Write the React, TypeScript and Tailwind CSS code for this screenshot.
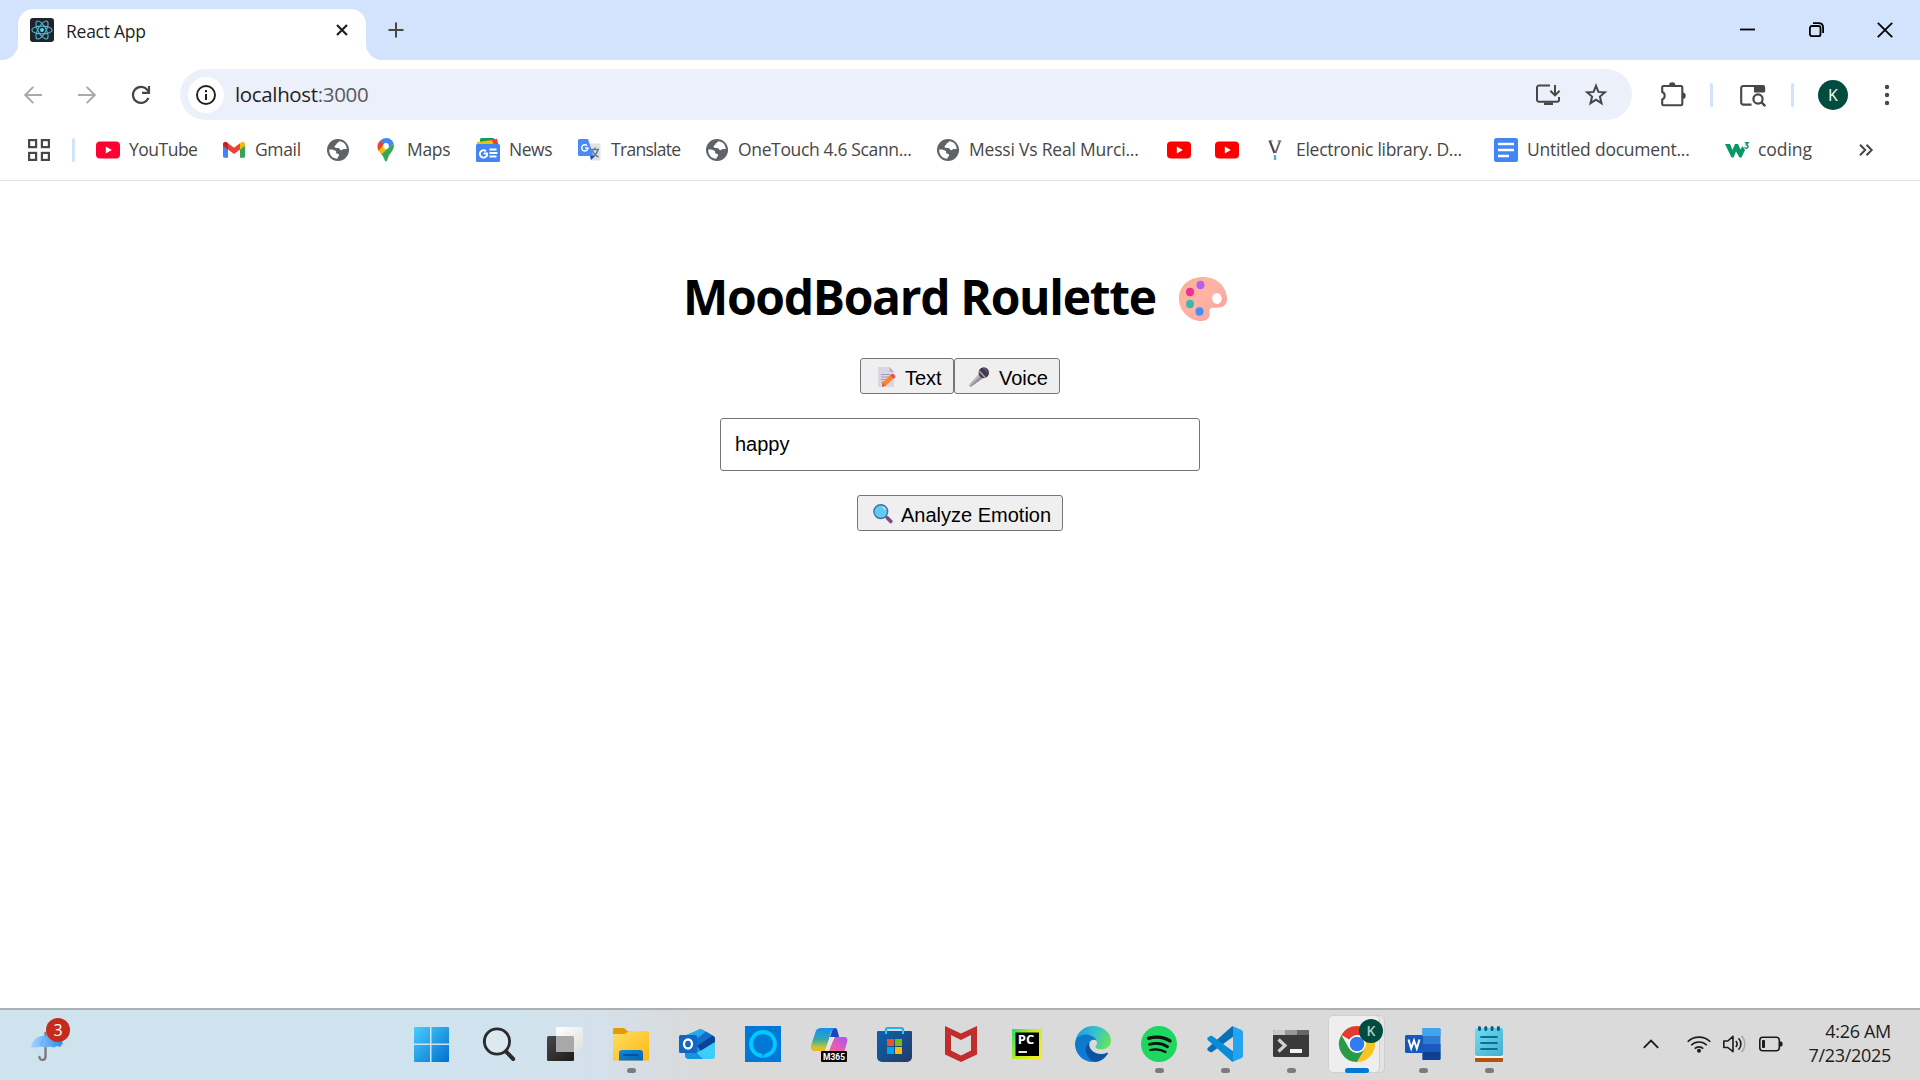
import React from "react";

type IconProps = { children: React.ReactNode; w?: number; h?: number; className?: string };

function Svg({ children, w = 24, h = 24, className = "" }: IconProps) {
  return (
    <svg width={w} height={h} viewBox={`0 0 ${w} ${h}`} fill="none" className={`block shrink-0 overflow-visible ${className}`}>
      {children}
    </svg>
  );
}

/* ---------- Browser: tab strip ---------- */

function ReactFavicon() {
  return (
    <Svg>
      <rect width="24" height="24" rx="3" fill="#20232a" />
      <g stroke="#4fb8d3" strokeWidth="1.1">
        <ellipse cx="12" cy="12" rx="10.2" ry="3.9" />
        <ellipse cx="12" cy="12" rx="10.2" ry="3.9" transform="rotate(60 12 12)" />
        <ellipse cx="12" cy="12" rx="10.2" ry="3.9" transform="rotate(120 12 12)" />
      </g>
      <circle cx="12" cy="12" r="1.9" fill="#61dafb" />
    </Svg>
  );
}

function TabStrip() {
  return (
    <div className="flex h-[60px] bg-white">
      <div className="w-[18px] rounded-br-[16px] bg-[#d3e2fd]" />
      <div className="w-[348px] [background:linear-gradient(#d3e2fd_50%,#fff_50%)]">
        <div className="mt-[9px] flex h-[51px] items-center rounded-t-[15px] bg-white pl-3 pr-[18px]">
          <div className="mb-[9px]">
            <ReactFavicon />
          </div>
          <span className="mb-[7px] ml-[12px] text-[17.5px] tracking-[-0.25px] text-[#1f1f1f]">React App</span>
          <Svg w={12} h={12} className="mb-[9px] ml-auto">
            <path d="M1 1l10 10M11 1L1 11" stroke="#1f1f1f" strokeWidth="2.2" />
          </Svg>
        </div>
      </div>
      <div className="flex flex-1 items-center rounded-bl-[16px] bg-[#d3e2fd] pl-[22px] pr-[27px]">
        <Svg w={16} h={16}>
          <path d="M8 .5v15M.5 8h15" stroke="#474747" strokeWidth="2" />
        </Svg>
        <div className="ml-auto flex items-center">
          <Svg w={15} h={15}>
            <path d="M0 6.5h15" stroke="#000" strokeWidth="1.8" />
          </Svg>
          <Svg w={16} h={16} className="ml-[53px]">
            <rect x="1.9" y="4" width="10.6" height="10.2" rx="2" stroke="#000" strokeWidth="1.8" />
            <path d="M5 1.2h5.5c2.8 0 4.6 1.6 4.6 4.4V11" stroke="#000" strokeWidth="1.8" />
          </Svg>
          <Svg w={16} h={16} className="ml-[53px]">
            <path d="M.8.8l14.4 14.4M15.2.8L.8 15.2" stroke="#000" strokeWidth="1.8" />
          </Svg>
        </div>
      </div>
    </div>
  );
}

/* ---------- Browser: toolbar ---------- */

function Toolbar() {
  return (
    <div className="flex h-[69px] items-center bg-white pl-6">
      <Svg w={18} h={18}>
        <path d="M18 9H1.6M9.3 .9L1.2 9l8.1 8.1" stroke="#a9a9a9" strokeWidth="2" />
      </Svg>
      <Svg w={18} h={18} className="ml-[36px]">
        <path d="M0 9h16.4M8.7 .9L16.8 9l-8.1 8.1" stroke="#a9a9a9" strokeWidth="2" />
      </Svg>
      <Svg w={18} h={18} className="ml-[36px]">
        <path d="M16.4 11.8A8 8 0 1 1 15 3.6L17 6" stroke="#474747" strokeWidth="2.2" />
        <path d="M17 0v6.8h-7" stroke="#474747" strokeWidth="2.2" />
      </Svg>
      <div className="ml-[30px] flex h-[51px] w-[1452px] items-center rounded-full bg-[#ecf0fa] pl-[8px] pr-[24px]">
        <div className="flex size-[36px] items-center justify-center rounded-full bg-white">
          <Svg w={20} h={20}>
            <circle cx="10" cy="10" r="9" stroke="#1f1f1f" strokeWidth="1.9" />
            <path d="M10 9v6M10 5v2.2" stroke="#1f1f1f" strokeWidth="2" />
          </Svg>
        </div>
        <span className="ml-[11px] text-[20.5px] tracking-[-0.35px] text-[#1f1f1f]">
          localhost<span className="text-[#5a5a5a]">:3000</span>
        </span>
        <Svg w={24} h={22} className="ml-auto">
          <path d="M14 1.5H3a2 2 0 0 0-2 2v12.2a2 2 0 0 0 2 2h18a2 2 0 0 0 2-2V13" stroke="#474747" strokeWidth="2" />
          <path d="M8 18.5h9V21H8z" fill="#474747" />
          <path d="M19 1v10M14.4 6.8l4.6 4.6 4.6-4.6" stroke="#474747" strokeWidth="2" />
        </Svg>
        <Svg w={24} h={24} className="ml-6">
          <path
            d="M12 2.8l2.4 6.1 6.5.5-5 4.2 1.6 6.6-5.5-3.6-5.5 3.6 1.6-6.6-5-4.2 6.5-.5z"
            stroke="#474747"
            strokeWidth="2"
          />
        </Svg>
      </div>
      <Svg w={26} h={24} className="ml-[29px]">
        <path
          d="M3.5 3H20a1.3 1.3 0 0 1 1.3 1.3V21a1.3 1.3 0 0 1-1.3 1.3H2.5A1.3 1.3 0 0 1 1.2 21v-4.6a4 4 0 0 0 0-7.4V4.3A1.3 1.3 0 0 1 2.5 3z"
          stroke="#474747"
          strokeWidth="2.1"
        />
        <path d="M8 2.5a3.2 3.2 0 0 1 6.4 0zM21.5 9.6a3.2 3.2 0 0 1 0 6.4z" fill="#474747" />
      </Svg>
      <div className="ml-[23px] h-6 w-[3px] rounded-full bg-[#d3e2fd]" />
      <Svg w={26} h={24} className="ml-[27px]">
        <path d="M11.5 21.6H3.2a2 2 0 0 1-2-2V5a2 2 0 0 1 2-2H22.5a1.6 1.6 0 0 1 1.6 1.6V9" stroke="#474747" strokeWidth="2.1" />
        <path d="M14 2.5h10.5v7H14z" fill="#474747" />
        <circle cx="18" cy="16" r="4.6" stroke="#474747" strokeWidth="2.2" fill="#fff" />
        <path d="M21.3 19.2l4 4" stroke="#474747" strokeWidth="2.4" />
      </Svg>
      <div className="ml-[25px] h-6 w-[3px] rounded-full bg-[#d3e2fd]" />
      <div className="ml-[24px] flex size-[30px] items-center justify-center rounded-full bg-[#004d40] text-[16px] text-white">
        K
      </div>
      <Svg w={6} h={22} className="ml-[36px]">
        <g fill="#474747">
          <circle cx="3" cy="3" r="2.2" />
          <circle cx="3" cy="11" r="2.2" />
          <circle cx="3" cy="19" r="2.2" />
        </g>
      </Svg>
    </div>
  );
}

/* ---------- Browser: bookmarks ---------- */

function YouTube({ color = "#ff0033" }: { color?: string }) {
  return (
    <Svg>
      <rect y="3.5" width="24" height="17" rx="4" fill={color} />
      <path d="M9.8 8.4v7.2l6-3.6z" fill="#fff" />
    </Svg>
  );
}

function Gmail() {
  return (
    <Svg w={22} h={24}>
      <path d="M0 7v11.2c0 .9.6 1.5 1.5 1.5H5V10z" fill="#4285f4" />
      <path d="M17 10v9.7h3.5c.9 0 1.5-.6 1.5-1.5V7z" fill="#34a853" />
      <path d="M17 5.2v6.3l5-3.8V6c0-2-2.2-3-3.8-1.8z" fill="#fbbc04" />
      <path d="M5 11.5V5.2l6 4.5 6-4.5v6.3L11 16z" fill="#ea4335" />
      <path d="M0 6v1.7l5 3.8V5.2L3.8 4.2C2.2 3 0 4 0 6z" fill="#c5221f" />
    </Svg>
  );
}

function Globe() {
  return (
    <Svg w={22} h={24}>
      <circle cx="11" cy="12" r="11" fill="#5f6368" />
      <path
        d="M2.2 11.5c2.6-.2 5.6.2 6.6 1.6 1 1.5-.5 1.7.9 2.3 1.6.5 2.8.9 2.3 2.4-.4 1-1.6 1-1.6 3C5.5 20.8 2 17 2.2 11.5z"
        fill="#fff"
      />
      <path
        d="M12 3.2c-.2 1.8-2.4 1.5-2.5 2.8-.1 1.4-2 1.2-2 2.6 0 1.7 2.6 1.5 3.7 1.5 1.5 0 1.5 2.2 3 2.2 1.3 0 1.3-1.2 2.6-1.2h2.9c0-4.3-3.2-7.9-7.7-7.9z"
        fill="#fff"
      />
    </Svg>
  );
}

function MapsPin() {
  return (
    <Svg w={16} h={24}>
      <path d="M8 0a8 8 0 0 1 7.6 5.5L9 11.5 2.3 2.6A8 8 0 0 1 8 0z" fill="#4285f4" />
      <path d="M2.3 2.6L6.2 6 1 13.5A8 8 0 0 1 2.3 2.6z" fill="#ea4335" />
      <path d="M10.5 10.2L3.3 16.3A20 20 0 0 1 .8 12.5L5.5 7z" fill="#fbbc04" />
      <path d="M15.6 5.5c1.2 5.2-1.8 8-4 11C9.7 19.2 9.5 23.5 8 23.5S6.3 19 3.3 16.3z" fill="#34a853" />
      <circle cx="8" cy="8" r="2.9" fill="#fff" />
    </Svg>
  );
}

function News() {
  return (
    <Svg>
      <path d="M4 5V1.5A1.5 1.5 0 0 1 5.5 0H17.5L19 2v6H4z" fill="#0f9d58" />
      <path d="M12 2.5L21 .8l1.4 6H12z" fill="#ea4335" />
      <path d="M1 4l15-1.8L18.5 9H1z" fill="#fbbc04" />
      <rect y="6" width="24" height="18" rx="1.5" fill="#4285f4" />
      <path d="M10 13.2A3.7 3.7 0 1 0 11.2 15.5H7.7" stroke="#fff" strokeWidth="1.9" />
      <path d="M13.5 11.5h7M13.5 15h8M13.5 18.5h7" stroke="#fff" strokeWidth="1.9" />
    </Svg>
  );
}

function Translate() {
  return (
    <Svg w={23} h={24}>
      <path d="M9 5.5h12a1.5 1.5 0 0 1 1.5 1.5v14a1.5 1.5 0 0 1-1.5 1.5h-8z" fill="#dfe1e4" />
      <path d="M13 11.5h8M17 9.5v2M20 11.5c-.8 3.5-3 6-5.5 7.5M14.5 12.5c1 3 3 5 6 6.5" stroke="#607988" strokeWidth="1.4" />
      <path d="M12 18h5l-4 4z" fill="#174ea6" />
      <path d="M1.5 1H10l5.5 17h-14A1.5 1.5 0 0 1 0 16.5v-14A1.5 1.5 0 0 1 1.5 1z" fill="#4a8af4" />
      <path d="M9 7.7A3.1 3.1 0 1 0 9.9 10H7" stroke="#fff" strokeWidth="1.5" />
    </Svg>
  );
}

function YLibrary() {
  return (
    <Svg w={14} h={24}>
      <path d="M.5 2.8h4M9.5 2.8H13.5" stroke="#8b8b8b" strokeWidth="1.2" />
      <path d="M1.8 3l4.7 12" stroke="#4a4a4a" strokeWidth="2.2" />
      <path d="M12 3L7.5 15" stroke="#666" strokeWidth="1.9" />
      <path d="M7 17v5" stroke="#4db4d3" strokeWidth="2.4" />
    </Svg>
  );
}

function Docs() {
  return (
    <Svg>
      <rect width="24" height="24" rx="2.5" fill="#4285f4" />
      <path d="M4 6h16M4 12h16M4 18h11" stroke="#fff" strokeWidth="2.4" />
    </Svg>
  );
}

function W3() {
  return (
    <Svg>
      <path d="M0 6h5l2.5 6L10 6h3l2.500 5.500L17.500 8l2.500 4-3.500 7.500h-2L11 13.500 8.500 19.500h-2z" fill="#059862" />
      <path d="M19.800 4.800h3.200l-1.600 2c2.300.2 2.100 3.400-.1 3.400-.8 0-1.400-.3-1.700-1" stroke="#059862" strokeWidth="1.500" />
    </Svg>
  );
}

type Bookmark = { icon: React.ReactNode; label?: string; box: string; text?: string };

const bookmarks: Bookmark[] = [
  { icon: <YouTube />, label: "YouTube", box: "w-[127px]", text: "ml-[9px] tracking-[-0.5px]" },
  { icon: <Gmail />, label: "Gmail", box: "w-[104px]", text: "ml-[10px] tracking-[-0.35px]" },
  { icon: <Globe />, box: "w-[51px]" },
  { icon: <MapsPin />, label: "Maps", box: "w-[98px]", text: "ml-[13px] tracking-[-0.3px]" },
  { icon: <News />, label: "News", box: "w-[102px]", text: "ml-[9px] tracking-[-0.45px]" },
  { icon: <Translate />, label: "Translate", box: "w-[128px]", text: "ml-[10px] tracking-[-0.7px]" },
  { icon: <Globe />, label: "OneTouch 4.6 Scann...", box: "w-[231px]", text: "ml-[10px] tracking-[-0.35px]" },
  { icon: <Globe />, label: "Messi Vs Real Murci...", box: "w-[230px]", text: "ml-[10px] tracking-[-0.2px]" },
  { icon: <YouTube color="#ff0000" />, box: "w-[48px]" },
  { icon: <YouTube color="#ff0000" />, box: "w-[53px]" },
  { icon: <YLibrary />, label: "Electronic library. D...", box: "w-[226px]", text: "ml-[14px] tracking-[-0.27px]" },
  { icon: <Docs />, label: "Untitled document...", box: "w-[231px]", text: "ml-[9px] tracking-[-0.22px]" },
  { icon: <W3 />, label: "coding", box: "w-[134px]", text: "ml-[9px] tracking-[-0.05px]" },
];

function BookmarksBar() {
  return (
    <div className="flex h-[52px] items-center border-b border-[#dedede] bg-white pb-[9px] pl-7">
      <Svg w={22} h={22}>
        <g stroke="#474747" strokeWidth="2.2">
          <rect x="1.1" y="1.1" width="7" height="7" />
          <rect x="13.9" y="1.1" width="7" height="7" />
          <rect x="1.1" y="13.9" width="7" height="7" />
          <rect x="13.9" y="13.9" width="7" height="7" />
        </g>
      </Svg>
      <div className="ml-[22px] mr-[21px] h-6 w-[3px] rounded-full bg-[#d3e2fd]" />
      {bookmarks.map((b, i) => (
        <div key={i} className={`flex h-6 shrink-0 items-center ${b.box}`}>
          {b.icon}
          {b.label && (
            <span className={`mb-[2px] whitespace-nowrap text-[17.5px] leading-6 text-[#474747] ${b.text}`}>{b.label}</span>
          )}
        </div>
      ))}
      <Svg w={14} h={12}>
        <path d="M1 .8L6.2 6 1 11.2M7.5.8L12.7 6l-5.2 5.2" stroke="#474747" strokeWidth="2" />
      </Svg>
    </div>
  );
}

/* ---------- Page ---------- */

function Palette() {
  return (
    <Svg w={50} h={46} className="-ml-px mt-[2px]">
      <defs>
        <linearGradient id="pal" x1="0" y1="0" x2="1" y2="1">
          <stop offset="0" stopColor="#f5b596" />
          <stop offset=".5" stopColor="#ffb3a5" />
          <stop offset="1" stopColor="#f99a9a" />
        </linearGradient>
      </defs>
      <path
        d="M25 1C11 1 1 10 1 22.5 1 36 12 45 23.5 45c5 0 8.5-3 8-7.5-.3-2.5-.5-5.5 3-5.7 3-.2 6 .2 8.5-.5 4-1.2 6.5-4.5 6-9.5C48 9.5 38 1 25 1zm14 16a4.8 5.5 0 1 1-.1 11 4.8 5.5 0 0 1 .1-11z"
        fill="url(#pal)"
        fillRule="evenodd"
      />
      <ellipse cx="22.5" cy="9" rx="4" ry="4.2" fill="#b860f0" />
      <ellipse cx="12" cy="16" rx="4" ry="4.2" fill="#f03090" />
      <ellipse cx="12" cy="28" rx="4" ry="4.2" fill="#3fb8ac" />
      <ellipse cx="21.5" cy="35.5" rx="4" ry="4.2" fill="#4390f5" />
    </Svg>
  );
}

function Memo() {
  return (
    <Svg w={19} h={20}>
      <path d="M0 0h11.5L16 4.8V20H0z" fill="#dcd5e4" />
      <path d="M11.5 0L16 4.8h-4.5z" fill="#b9aec6" />
      <path d="M3 7.5h9M3 10h9M3 12.5h6M3 15h4" stroke="#a69cb2" strokeWidth="1" />
      <path d="M4.5 15.5L12 8.5l3.3 3.3-7.5 7-3.8.9z" fill="#ff822d" />
      <path d="M12 8.5l1.5-1.2c1.8-1 4.7 1.6 3.5 3.2l-1.7 1.3z" fill="#f9443e" />
      <path d="M4.5 15.5l3.3 3.3-3.8.9z" fill="#c46a3c" />
    </Svg>
  );
}

function Mic() {
  return (
    <Svg w={20} h={20}>
      <path d="M10.5 6.5l3.8 4.5L2.5 19.5c-1.5.5-2.5-.5-1.8-2z" fill="#96909c" />
      <path d="M10.5 6.5l1.5 2L1 19.2l-.3-1.7z" fill="#bcb6c0" />
      <ellipse cx="14.8" cy="5.7" rx="5.2" ry="5.5" fill="#43374f" />
      <path d="M10.2 4l6.2 6.8" stroke="#a49dac" strokeWidth="1.7" />
      <path d="M14 1.5c2 0 4 2 4 4" stroke="#6b6076" strokeWidth="1.2" />
    </Svg>
  );
}

function Magnifier() {
  return (
    <Svg w={20} h={20}>
      <path d="M12 13l1.5-1.5 2.3 1.3 3.6 3.7c1 1.3-.9 3.6-2.3 2.7l-3.8-3.7z" fill="#7d4a86" />
      <circle cx="7.8" cy="7.6" r="6.9" fill="#5fccf0" stroke="#4a6ba5" strokeWidth="1.4" />
      <path d="M9.5 2.8c1.5.6 2.4 1.6 2.8 3" stroke="#b8ecfb" strokeWidth="1.3" />
    </Svg>
  );
}

const buttonClass =
  "flex h-9 items-center rounded-[3px] border border-[#767676] bg-[#efefef] pt-[2px] font-['Liberation_Sans',sans-serif] text-[20px] leading-[23px] text-black";

function Page() {
  return (
    <main className="flex flex-1 flex-col items-center bg-white pt-[85px] text-black">
      <h1 className="flex h-[64px] items-center pr-[5px] font-bold leading-[64px]">
        <span className="-ml-[4px] mb-[3px] w-[496px] whitespace-nowrap text-[48px] tracking-[-1.33px]">
          MoodBoard Roulette
        </span>
        <Palette />
      </h1>
      <div className="mt-[28px] flex">
        <button className={`${buttonClass} w-[94px] pl-[17px]`}>
          <Memo />
          <span className="ml-2 mt-[3px]">Text</span>
        </button>
        <button className={`${buttonClass} w-[106px] pl-[14px]`}>
          <Mic />
          <span className="ml-[10px] mt-[3px]">Voice</span>
        </button>
      </div>
      <input
        defaultValue="happy"
        className="mt-6 h-[53px] w-[480px] rounded-[3px] border border-[#767676] bg-white px-[14px] font-['Liberation_Sans',sans-serif] text-[20px] outline-none"
      />
      <button className={`${buttonClass} mt-6 w-[206px] pl-[15px]`}>
        <Magnifier />
        <span className="ml-2 mt-[3px] whitespace-nowrap">Analyze Emotion</span>
      </button>
    </main>
  );
}

/* ---------- Taskbar ---------- */

function Start() {
  return (
    <Svg w={36} h={36} className="mr-1">
      <defs>
        <linearGradient id="win" x1="0" y1="0" x2="36" y2="36" gradientUnits="userSpaceOnUse">
          <stop stopColor="#4bd0ff" />
          <stop offset="1" stopColor="#0070d0" />
        </linearGradient>
      </defs>
      <path
        d="M2 1h15v16.5H1V2a1 1 0 0 1 1-1zM18.5 1H35a1 1 0 0 1 1 1v15.5H18.5zM1 19h16v17H2a1 1 0 0 1-1-1zM18.5 19H36v16a1 1 0 0 1-1 1H18.5z"
        fill="url(#win)"
      />
    </Svg>
  );
}

function Search() {
  return (
    <Svg w={36} h={36}>
      <circle cx="16" cy="15.5" r="12.6" stroke="#2b2b2b" strokeWidth="2.9" fill="#dce9f1" />
      <path d="M25 25.5l7.2 7.5" stroke="#2b2b2b" strokeWidth="4" strokeLinecap="round" />
    </Svg>
  );
}

function TaskView() {
  return (
    <Svg w={36} h={36}>
      <defs>
        <linearGradient id="tv1" x1="0" y1="0" x2="1" y2="1">
          <stop stopColor="#484848" />
          <stop offset="1" stopColor="#1c1c1c" />
        </linearGradient>
        <linearGradient id="tv2" x1="0" y1="0" x2="1" y2="1">
          <stop stopColor="#fff" />
          <stop offset="1" stopColor="#dedede" />
        </linearGradient>
      </defs>
      <rect x="0" y="10" width="27" height="25" rx="1.5" fill="url(#tv1)" />
      <rect x="9" y="1" width="27" height="25" rx="1.5" fill="url(#tv2)" />
      <path d="M9 10h16.5a1.5 1.5 0 0 1 1.5 1.5V26H10.5A1.5 1.5 0 0 1 9 24.5z" fill="#a8a8a8" />
    </Svg>
  );
}

function Explorer() {
  return (
    <Svg w={36} h={36}>
      <defs>
        <linearGradient id="fol" x1="0" y1="0" x2="1" y2="1">
          <stop stopColor="#ffdd66" />
          <stop offset="1" stopColor="#fcb90e" />
        </linearGradient>
        <linearGradient id="fol2" x1="0" y1="0" x2="1" y2="1">
          <stop stopColor="#1389dc" />
          <stop offset="1" stopColor="#0563b4" />
        </linearGradient>
      </defs>
      <path d="M0 3.5A1.5 1.5 0 0 1 1.5 2H11l4 3.5H20V12H0z" fill="#e09c04" />
      <path d="M0 8h12l3.5-2.8H35a1 1 0 0 1 1 1V34.5H0z" fill="url(#fol)" />
      <path d="M6 34.5V27a3 3 0 0 1 3-3h18a3 3 0 0 1 3 3v7.5z" fill="url(#fol2)" />
      <path d="M10.5 29h14" stroke="#064a8c" strokeWidth="1.7" strokeLinecap="round" />
    </Svg>
  );
}

function Outlook() {
  return (
    <Svg w={36} h={36}>
      <path d="M6 12L20 3.5q1.5-1 3 0L36 11v7L18 27H6z" fill="#1e8fe0" />
      <path d="M7 9L20 3.5q1.5-1 3 0L27 6 14 14z" fill="#28a8ea" />
      <path d="M27 5.5l6.5 4L18 20v-7z" fill="#1070cc" />
      <path d="M33.5 9.5Q36 11 36 13v3L22 25l-4-5z" fill="#0a4396" />
      <path d="M36 16v13.5a3.5 3.5 0 0 1-3.5 3.5H10a4 4 0 0 1-4-4v-2h12z" fill="#3ccdf8" />
      <path d="M6 27h12l6 6H10a4 4 0 0 1-4-4z" fill="#1595e0" />
      <rect y="9" width="18" height="18" rx="1.5" fill="#1066c2" />
      <ellipse cx="9" cy="18" rx="4" ry="4.5" stroke="#fff" strokeWidth="2.3" />
    </Svg>
  );
}

function Alexa() {
  return (
    <Svg w={36} h={36}>
      <path d="M0 0h36v36H0z" fill="#0078d7" />
      <circle cx="18" cy="18" r="12" stroke="#00caff" strokeWidth="3.8" />
      <path d="M18 32.5l-.6-5 3.2-.4-1.6 1.9z" fill="#0078d7" />
    </Svg>
  );
}

function M365() {
  return (
    <Svg w={36} h={36}>
      <defs>
        <linearGradient id="m1" x1="0" y1="0" x2="0" y2="1">
          <stop stopColor="#1a8cf0" />
          <stop offset=".5" stopColor="#30aab0" />
          <stop offset=".85" stopColor="#c8c828" />
          <stop offset="1" stopColor="#ffb020" />
        </linearGradient>
        <linearGradient id="m2" x1="1" y1="0" x2="0" y2="1">
          <stop stopColor="#a855f0" />
          <stop offset=".5" stopColor="#ea5cae" />
          <stop offset="1" stopColor="#ff7850" />
        </linearGradient>
      </defs>
      <path d="M22 2h2c2 0 2.5 2 4 9h-9z" fill="#1846c0" />
      <path d="M10 2h15c-4 1-5 4-6.5 9L14 25H3.5C0 25-.8 22 .5 18l4-12C5.5 3 7 2 10 2z" fill="url(#m1)" />
      <path d="M24 11h9c3 0 4 2 3 5.5l-3 10c-1 2.5-3 3.5-5 3.5H10c4-1 6-3 7-6z" fill="url(#m2)" />
      <path d="M19 11h4.5L18 25h-4z" fill="#e8e4ea" />
      <rect x="10" y="25" width="26" height="11" rx="1" fill="#080808" />
      <text x="12" y="33.9" fontSize="9.5" fontWeight="700" fill="#fff" className="font-['Roboto',sans-serif]" textLength="22" lengthAdjust="spacingAndGlyphs">
        M365
      </text>
    </Svg>
  );
}

function Store() {
  return (
    <Svg w={36} h={36}>
      <defs>
        <linearGradient id="sto" x1="0" y1="0" x2="1" y2="1">
          <stop stopColor="#0865b2" />
          <stop offset="1" stopColor="#243a66" />
        </linearGradient>
      </defs>
      <path d="M9 7.5V3.5A1.5 1.5 0 0 1 10.5 2h14A1.5 1.5 0 0 1 26 3.5v4" stroke="#1db5ee" strokeWidth="2.2" />
      <path d="M0 6a1 1 0 0 1 1-1h33a1 1 0 0 1 1 1v25a5 5 0 0 1-5 5H5a5 5 0 0 1-5-5z" fill="url(#sto)" />
      <path d="M9 5v3M26 5v3" stroke="#3cc8f6" strokeWidth="2" />
      <path d="M10 13h7v7h-7z" fill="#f25022" />
      <path d="M18 13h7v7h-7z" fill="#7fba00" />
      <path d="M10 21h7v7h-7z" fill="#00a4ef" />
      <path d="M18 21h7v7h-7z" fill="#ffb900" />
    </Svg>
  );
}

function McAfee() {
  return (
    <Svg w={36} h={36}>
      <path d="M2 0l16 7.5L34 0v28.5L18 36 2 28.5zM8 9v15.5l10 5 10-5V9l-10 5z" fill="#c12d2d" fillRule="evenodd" />
    </Svg>
  );
}

function PyCharm() {
  return (
    <Svg w={36} h={36}>
      <defs>
        <linearGradient id="pyc" x1="0" y1="0" x2="1" y2=".6">
          <stop stopColor="#21e06a" />
          <stop offset=".5" stopColor="#b8ea2a" />
          <stop offset="1" stopColor="#f0ee20" />
        </linearGradient>
      </defs>
      <rect x="3" y="3" width="30" height="30" fill="url(#pyc)" />
      <rect x="6.5" y="6.5" width="23.5" height="23.5" fill="#000" />
      <path d="M9.5 26h8.5" stroke="#fff" strokeWidth="1.8" />
      <text x="8.8" y="18" fontSize="12" fontWeight="700" fill="#fff" className="font-['Open_Sans',sans-serif]" textLength="16.5" lengthAdjust="spacingAndGlyphs">
        PC
      </text>
    </Svg>
  );
}

function Edge() {
  return (
    <Svg w={36} h={36}>
      <defs>
        <linearGradient id="ed1" x1="0" y1=".3" x2="1" y2=".6">
          <stop stopColor="#1b9de2" />
          <stop offset=".5" stopColor="#35c1d0" />
          <stop offset="1" stopColor="#66e558" />
        </linearGradient>
        <linearGradient id="ed2" x1="0" y1="0" x2=".3" y2="1">
          <stop stopColor="#0f78c4" />
          <stop offset="1" stopColor="#0a7cdc" />
        </linearGradient>
      </defs>
      <path d="M.3 15C2 6 9.5 0 18 0c10 0 18 7 18 14.500 0 5.500-4 9-9.500 9-4 0-6-1.500-6-2.500s1.500-1.500 1.500-4C22 14 18 9 13 9 7 9 2 11.500.3 15z" fill="url(#ed1)" />
      <path d="M0 18c0-6 5-9.500 10.500-9.500S20 11 21.500 14.500c-3-1.500-6.500-.5-7.500 3.500-1.500 6 2 10.500 8 12.500-3 4-3.500 5-4 5.500C8 36 0 28 0 18z" fill="url(#ed2)" />
      <path d="M14.200 16.500c-3.500 3-4.500 6.500-3 10.500C13 32 17.500 36 20 36c6 0 10.500-4.500 13-8.500.3-.7-.3-1-1-.7-5 2.200-12 1.500-15.500-2.800-1.800-2-2.500-4.500-2.300-7.500z" fill="#0c53a0" />
    </Svg>
  );
}

function Spotify() {
  return (
    <Svg w={36} h={36}>
      <circle cx="18" cy="18" r="18" fill="#1ed760" />
      <g stroke="#111" strokeLinecap="round">
        <path d="M7.5 12.3c7.5-2 15.5-1.2 21.5 2.6" strokeWidth="3.3" />
        <path d="M8.5 18.4c6.5-1.7 13-.9 18 2.3" strokeWidth="2.8" />
        <path d="M9.3 24c5.4-1.3 10.6-.8 15.2 2" strokeWidth="2.3" />
      </g>
    </Svg>
  );
}

function VSCode() {
  return (
    <Svg w={36} h={36}>
      <path d="M26 .3L34.5 4A2.5 2.5 0 0 1 36 6.3V29.7A2.5 2.5 0 0 1 34.5 32L26 35.7z" fill="#24a3f2" />
      <path d="M26 .3v10.5L4.5 26.5 1 24.8c-1-.8-1-2 0-3L24.5.8Q25.2.2 26 .3z" fill="#0771b8" />
      <path d="M26 35.7V25.2L4.5 9.5 1 11.2c-1 .8-1 2 0 3L24.5 35.2q.7.6 1.5.5z" fill="#0b8bd8" />
    </Svg>
  );
}

function Terminal() {
  return (
    <Svg w={36} h={36}>
      <rect y="4" width="36" height="27" rx="1.5" fill="#3a3a3a" />
      <path d="M0 9V5.5A1.5 1.5 0 0 1 1.5 4H12v5z" fill="#c9c9c9" />
      <path d="M12 4h12v5H12z" fill="#979797" />
      <path d="M24 4h10.5A1.5 1.5 0 0 1 36 5.5V9H24z" fill="#666" />
      <path d="M5.5 13.5l6.5 6-6.5 6" stroke="#d0d0d0" strokeWidth="3.2" />
      <path d="M17 23h12v4H17z" fill="#f0f0f0" />
    </Svg>
  );
}

function Chrome() {
  return (
    <Svg w={36} h={36}>
      <path d="M18 18L2.4 9A18 18 0 0 1 33.6 9H18z" fill="#e33b2e" />
      <path d="M18 9h15.6A18 18 0 0 1 18 36l7.8-13.5z" fill="#fcc31e" />
      <path d="M25.8 22.5L18 36A18 18 0 0 1 2.4 9l7.8 13.5z" fill="#2a9a48" />
      <circle cx="18" cy="18" r="9" fill="#fff" />
      <circle cx="18" cy="18" r="7.3" fill="#2f7cf0" />
    </Svg>
  );
}

function Word() {
  return (
    <Svg w={36} h={36}>
      <rect x="17.5" y="2" width="18" height="32" rx="1.5" fill="#2b7cd3" />
      <path d="M17.500 10V2H34a1.500 1.500 0 0 1 1.500 1.500V10z" fill="#41a5ee" />
      <path d="M17.500 18h18v8h-18z" fill="#185abd" />
      <path d="M17.500 26h18v6.500A1.500 1.500 0 0 1 34 34H17.500z" fill="#103f91" />
      <rect y="9" width="18" height="18" rx="1.5" fill="#1757bb" />
      <path d="M3.5 13.5l2.7 9L9 14.5l2.8 8 2.7-9" stroke="#fff" strokeWidth="2" />
    </Svg>
  );
}

function Notepad() {
  return (
    <Svg w={36} h={36}>
      <defs>
        <linearGradient id="note" x1="0" y1="0" x2="1" y2="1">
          <stop stopColor="#72dcf2" />
          <stop offset="1" stopColor="#42aed0" />
        </linearGradient>
      </defs>
      <path d="M4 31.5h28V35a1 1 0 0 1-1 1H5a1 1 0 0 1-1-1z" fill="#b4540c" />
      <path d="M4 29h28v3H4z" fill="#f4f4f4" />
      <rect x="4" y="2" width="28" height="28" rx="2" fill="url(#note)" />
      <path d="M8.5 1.5v2M14.8 1.5v2M21.1 1.5v2M27.4 1.5v2" stroke="#0d5f80" strokeWidth="3" strokeLinecap="round" />
      <path d="M10 11h16M10 17h16M10 23h16" stroke="#0a7096" strokeWidth="1.8" strokeLinecap="round" />
    </Svg>
  );
}

const apps: { icon: React.ReactNode; running?: boolean; active?: boolean }[] = [
  { icon: <Start /> },
  { icon: <Search /> },
  { icon: <TaskView /> },
  { icon: <Explorer />, running: true },
  { icon: <Outlook /> },
  { icon: <Alexa /> },
  { icon: <M365 /> },
  { icon: <Store /> },
  { icon: <McAfee /> },
  { icon: <PyCharm /> },
  { icon: <Edge /> },
  { icon: <Spotify />, running: true },
  { icon: <VSCode />, running: true },
  { icon: <Terminal />, running: true },
  { icon: <Chrome />, active: true },
  { icon: <Word />, running: true },
  { icon: <Notepad />, running: true },
];

function Umbrella() {
  return (
    <Svg w={32} h={30}>
      <defs>
        <linearGradient id="umb" x1="0" y1="0" x2="1" y2="0">
          <stop stopColor="#a5d4ff" />
          <stop offset="1" stopColor="#2a8cf0" />
        </linearGradient>
      </defs>
      <path d="M14.5 0v4M14.5 14v9.5c0 4.5-6 4.5-6 .5" stroke="#777" strokeWidth="2.3" strokeLinecap="round" />
      <path d="M0 14.5C1 7 7 2.5 14.5 2.5S28 5 32 10l-3 4-3-1-3 1.5-4-1-4.5 1-4.5-1-5 1z" fill="url(#umb)" />
      <path d="M14.5 3c-3 3-4.5 6-4.5 10.5M14.5 3c3 3 4.5 6 4.5 10.5" stroke="#5ba8ee" strokeWidth=".7" />
    </Svg>
  );
}

function Taskbar() {
  return (
    <div className="flex h-[72px] shrink-0 border-t-2 border-[#adb0b3] [background:linear-gradient(90deg,#cee3ee_0px,#d0e3ee_500px,#d4e0eb_600px,#dadada_700px,#dadada_100%)]">
      <div className="w-[400px] pl-[31px] pt-[23px]">
        <div className="relative w-8">
          <Umbrella />
          <div className="absolute -top-[15px] left-[15px] flex size-6 items-center justify-center rounded-full bg-[#c42b1c] text-[16px] leading-none text-white">
            3
          </div>
        </div>
      </div>
      {apps.map((a, i) => (
        <div key={i} className="relative flex w-[66px] shrink-0 justify-center pt-4">
          {a.active && (
            <>
              <div className="absolute left-[42px] top-[5px] h-[58px] w-[19px] rounded-[5px] border border-[#cdcdcd] bg-[#e4e4e4]" />
              <div className="absolute left-[4px] top-[5px] h-[58px] w-[52px] rounded-[5px] border border-[#cfcfcf] bg-[#eeeeee]" />
            </>
          )}
          <div className="relative">
            {a.icon}
            {a.active && (
              <div className="absolute -top-[7px] left-[20px] flex size-6 items-center justify-center rounded-full bg-[#004d40] text-[14px] font-semibold leading-none text-[#b5c9c5]">
                K
              </div>
            )}
          </div>
          {a.running && <div className="absolute left-[29px] top-[58px] h-[5px] w-[9px] rounded-full bg-[#7c7c7c]" />}
          {a.active && <div className="absolute left-[21px] top-[58px] h-[5px] w-6 rounded-full bg-[#0078d4]" />}
        </div>
      ))}
      <div className="flex flex-1 items-center pb-[2px] pl-[121px] pr-[29px]">
        <Svg w={16} h={10}>
          <path d="M.8 8.8L8 1.6l7.2 7.2" stroke="#1c1c1c" strokeWidth="1.9" />
        </Svg>
        <Svg w={24} h={18} className="ml-7">
          <g stroke="#1c1c1c" strokeWidth="1.6">
            <path d="M.7 6.8a16 16 0 0 1 22.6 0" />
            <path d="M4.2 10.3a11 11 0 0 1 15.6 0" />
            <path d="M7.7 13.6a6.2 6.2 0 0 1 8.6 0" />
          </g>
          <circle cx="12" cy="15.8" r="2" fill="#1c1c1c" />
        </Svg>
        <Svg w={24} h={18} className="ml-3">
          <path d="M.8 6h4L10 1.3v15.4L4.8 12.5h-4z" stroke="#1c1c1c" strokeWidth="1.6" strokeLinejoin="round" />
          <path d="M12.8 6a4.5 4.5 0 0 1 0 6M15.5 3.3a8 8 0 0 1 0 11.4" stroke="#1c1c1c" strokeWidth="1.6" />
          <path d="M18.6.8a12 12 0 0 1 0 16.4" stroke="#a8a8a8" strokeWidth="1.4" />
        </Svg>
        <Svg w={24} h={16} className="ml-3">
          <rect x=".8" y="1.3" width="19.5" height="13.4" rx="3" stroke="#1c1c1c" strokeWidth="1.6" />
          <rect x="3" y="4" width="3" height="8" rx=".8" fill="#1c1c1c" />
          <path d="M20.5 5.5h1.5a1.5 1.5 0 0 1 1.5 1.5v2a1.5 1.5 0 0 1-1.5 1.5h-1.5z" fill="#1c1c1c" />
        </Svg>
        <div className="mb-[2px] ml-auto whitespace-nowrap text-right text-[18px] leading-6 tracking-[-0.3px] text-[#1c1c1c]">
          <div>4:26 AM</div>
          <div>7/23/2025</div>
        </div>
      </div>
    </div>
  );
}

export default function App() {
  return (
    <div className="flex h-[1080px] w-[1920px] flex-col overflow-hidden bg-white font-['Open_Sans',sans-serif]">
      <TabStrip />
      <Toolbar />
      <BookmarksBar />
      <Page />
      <Taskbar />
    </div>
  );
}
